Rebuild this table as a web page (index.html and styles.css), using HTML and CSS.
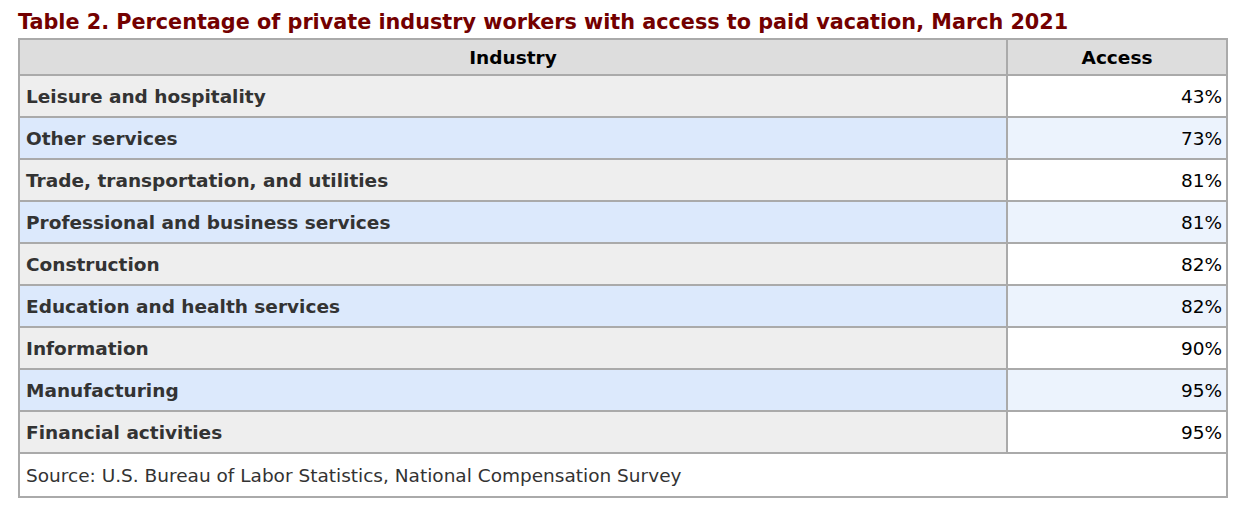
FILE: index.html
```html
<!DOCTYPE html>
<html lang="en">
<head>
<meta charset="utf-8">
<title>Table 2</title>
<link rel="stylesheet" href="styles.css">
</head>
<body>
<div class="wrap">
  <h2 class="caption">Table 2. Percentage of private industry workers with access to paid vacation, March 2021</h2>
  <table class="data">
    <thead>
      <tr><th class="c-ind">Industry</th><th class="c-acc">Access</th></tr>
    </thead>
    <tbody>
      <tr class="odd"><th>Leisure and hospitality</th><td>43%</td></tr>
      <tr class="even"><th>Other services</th><td>73%</td></tr>
      <tr class="odd"><th>Trade, transportation, and utilities</th><td>81%</td></tr>
      <tr class="even"><th>Professional and business services</th><td>81%</td></tr>
      <tr class="odd"><th>Construction</th><td>82%</td></tr>
      <tr class="even"><th>Education and health services</th><td>82%</td></tr>
      <tr class="odd"><th>Information</th><td>90%</td></tr>
      <tr class="even"><th>Manufacturing</th><td>95%</td></tr>
      <tr class="odd"><th>Financial activities</th><td>95%</td></tr>
    </tbody>
    <tfoot>
      <tr><td colspan="2" class="source">Source: U.S. Bureau of Labor Statistics, National Compensation Survey</td></tr>
    </tfoot>
  </table>
</div>
</body>
</html>
```
FILE: styles.css
```css
html, body {
  margin: 0;
  padding: 0;
  background: #ffffff;
}
.wrap {
  padding: 9px 0 0 18px;
  width: 1210px;
  font-family: "DejaVu Sans", sans-serif;
}
.caption {
  margin: 0 0 3px 0;
  font-size: 20.75px;
  line-height: 26px;
  font-weight: bold;
  color: #730000;
  white-space: nowrap;
}
.data {
  border-collapse: collapse;
  width: 1210px;
  border: 2px solid #aaaaaa;
  font-size: 18.5px;
  color: #333333;
}
.data th, .data td {
  border: 2px solid #aaaaaa;
  padding: 0 4px 0 6px;
}
.data thead th {
  height: 34px;
  background: #dddddd;
  color: #000000;
  text-align: center;
  font-weight: bold;
  padding: 0;
}
.c-ind { width: 986px; }
.data tbody th {
  height: 40px;
  text-align: left;
  font-weight: bold;
}
.data tbody td {
  text-align: right;
  color: #000000;
}
.odd th { background: #eeeeee; }
.odd td { background: #ffffff; }
.even th { background: #dce9fc; }
.even td { background: #ecf3fd; }
.source {
  height: 42px;
  background: #ffffff;
  text-align: left;
}
```
